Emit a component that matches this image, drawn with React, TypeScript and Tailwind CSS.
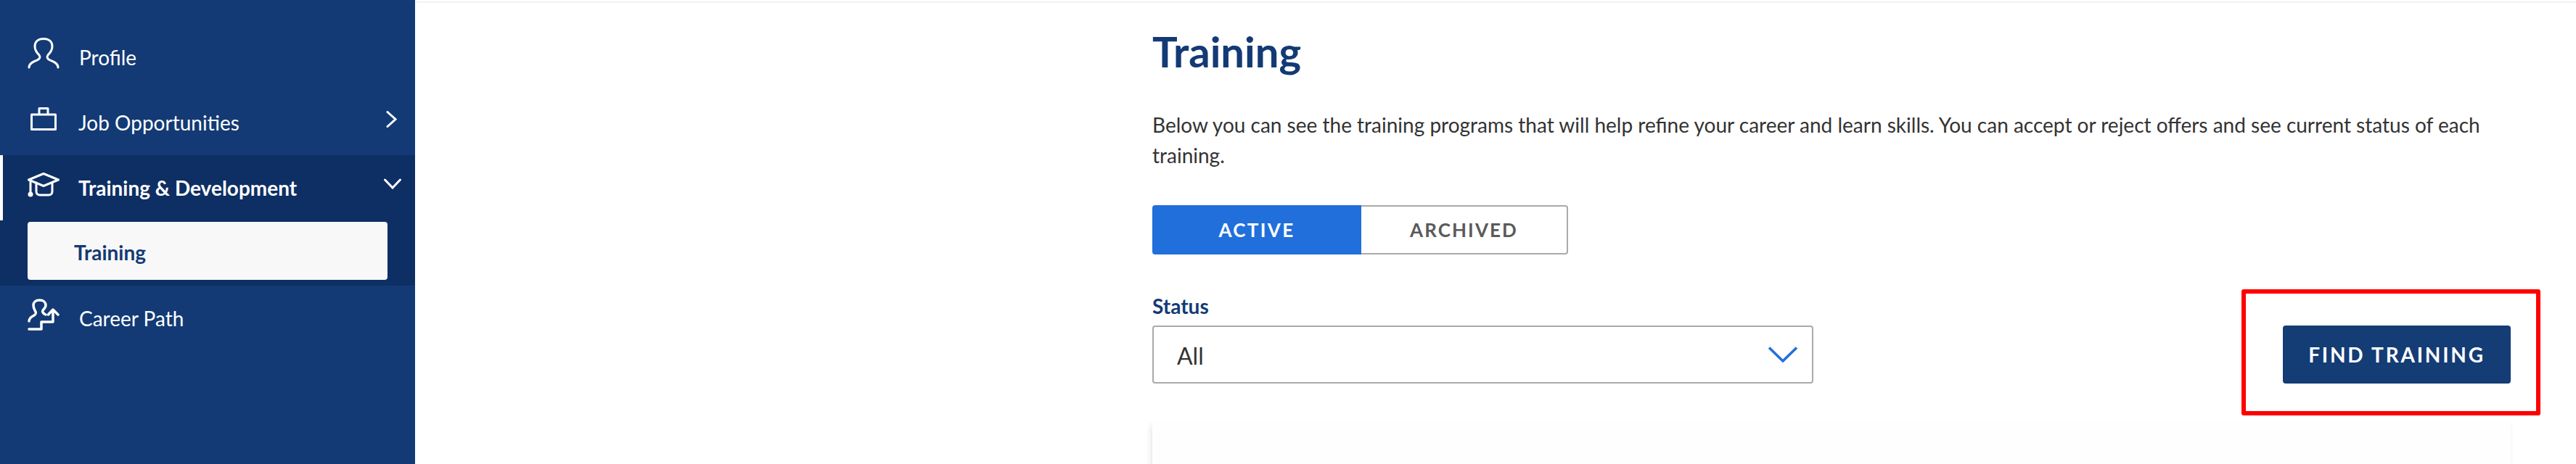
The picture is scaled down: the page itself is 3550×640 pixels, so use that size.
// ─── Sidebar icons ────────────────────────────────────────────────────────────

function ProfileIcon() {
  return (
    <svg width="44" height="44" viewBox="0 0 44 44" fill="none" stroke="white" strokeWidth="3" strokeLinecap="round">
      <path d="M2 41C2 35 9 33 13 31C17 29 18 27 16 24C12 20 10 16 10 12C10 5 15 1.5 22 1.5C29 1.5 34 5 34 12C34 16 32 20 28 24C26 27 27 29 31 31C35 33 42 35 42 41" />
    </svg>
  );
}

function BriefcaseIcon() {
  return (
    <svg width="36" height="32" viewBox="0 0 36 32" fill="none" stroke="white" strokeWidth="3" strokeLinejoin="round">
      <rect x="1.5" y="10" width="33" height="20.5" />
      <path d="M12 10V1.5H24V10" />
    </svg>
  );
}

function GradCapIcon() {
  return (
    <svg width="44" height="34" viewBox="0 0 44 34" fill="none" stroke="white" strokeWidth="3" strokeLinecap="round" strokeLinejoin="round">
      <path d="M22 1.5L42.5 10L22 18.5L1.5 10L22 1.5Z" />
      <path d="M12 14V26C12 29 14 31 17 31H29C32 31 34 29 34 26V14" />
      <path d="M4 11V27" />
      <circle cx="4" cy="30" r="3.5" fill="white" stroke="none" />
    </svg>
  );
}

function CareerIcon() {
  return (
    <svg width="44" height="44" viewBox="0 0 44 44" fill="none" stroke="white" strokeWidth="3.5" strokeLinecap="round" strokeLinejoin="round">
      <path d="M2 31C2 27 5 25 9 23C12 21 12 19 10 16C8.5 13 8 11 8 9C8 5 11 2 16.5 2C22 2 25 5 25 9C25 12 23 14 21 16C20 18 21 20 25 22" />
      <path d="M2 42H19V32H35V16" />
      <path d="M28.5 22L35 15L42 22" />
    </svg>
  );
}

// ─── Page ─────────────────────────────────────────────────────────────────────

export default function App() {
  return (
    <div className="relative flex h-[640px] w-[3550px] overflow-hidden bg-white font-[Lato,sans-serif]">
      <aside className="w-[572px] shrink-0 bg-[#133a75] pt-[34px] text-[28px] text-white">
        <div className="flex h-[90px] items-center pl-[38px]">
          <div className="-mt-[10px] flex w-[71px]">
            <ProfileIcon />
          </div>
          <span>Profile</span>
        </div>

        <div className="flex h-[90px] items-center pr-[25px] pl-[42px]">
          <div className="-mt-[10px] flex w-[66px]">
            <BriefcaseIcon />
          </div>
          <span className="flex-1">Job Opportunities</span>
          <svg width="15" height="23" viewBox="0 0 15 23" fill="none" stroke="white" strokeWidth="3" strokeLinecap="round" className="-mt-[9px]">
            <path d="M2 1.5L13 11.5L2 21.5" />
          </svg>
        </div>

        <div className="bg-[#0e2f64]">
          <div className="flex h-[90px] items-center border-l-4 border-white pr-[19px] pl-[34px]">
            <div className="-mt-[8px] flex w-[70px]">
              <GradCapIcon />
            </div>
            <span className="flex-1 font-bold">Training &amp; Development</span>
            <svg width="24" height="15" viewBox="0 0 24 15" fill="none" stroke="white" strokeWidth="3" strokeLinecap="round" className="-mt-[11px]">
              <path d="M1.5 2L12 13L22.5 2" />
            </svg>
          </div>
          <div className="px-[38px] pt-[2px] pb-[8px]">
            <div className="flex h-[80px] items-center rounded-[4px] bg-[#f8f8f8] pt-[3px] pl-[64px] font-bold text-[#133a75]">
              Training
            </div>
          </div>
        </div>

        <div className="flex h-[90px] items-center pl-[38px]">
          <div className="-mt-[10px] flex w-[71px]">
            <CareerIcon />
          </div>
          <span>Career Path</span>
        </div>
      </aside>

      <main className="mt-[2px] min-w-0 flex-1 border-t-2 border-[#f2f2f2] pr-[90px] pl-[1016px]">
        <h1 className="mt-[31px] text-[58px] leading-[72px] font-bold text-[#133a75]">Training</h1>

        <p className="mt-[44px] text-[28px] leading-[42px] text-[#333333]">
          Below you can see the training programs that will help refine your career and learn skills. You can accept or reject offers and see current status of each training.
        </p>

        <div className="mt-[48px] flex h-[68px] w-[573px] text-[26px] font-bold">
          <div className="flex w-[288px] items-center justify-center rounded-l-[4px] bg-[#216fdb] tracking-[0.09em] text-white">ACTIVE</div>
          <div className="flex flex-1 items-center justify-center rounded-r-[4px] border-2 border-l-0 border-[#aaaaaa] tracking-[0.08em] text-[#5a5a5a]">ARCHIVED</div>
        </div>

        <div className="mt-[50px] flex items-end justify-between">
          <div className="w-[911px]">
            <label className="block text-[28px] leading-[42px] font-bold text-[#133a75]">Status</label>
            <div className="mt-[6px] flex h-[80px] items-center justify-between rounded-[4px] border-2 border-[#aaaaaa] pr-[20px] pl-[32px] text-[32px] text-[#333333]">
              <span className="pt-[3px]">All</span>
              <svg width="40" height="22" viewBox="0 0 40 22" fill="none" stroke="#216fdb" strokeWidth="3.5">
                <path d="M1 1.5L20 20L39 1.5" />
              </svg>
            </div>
          </div>
          <button className="flex h-[80px] w-[314px] items-center justify-center rounded-[4px] bg-[#143c75] text-[28px] font-bold tracking-[0.1em] text-white">
            FIND TRAINING
          </button>
        </div>

        <div className="mt-[49px] h-[200px] bg-[#fefefe] shadow-[-2px_8px_8px_rgba(0,0,0,0.1)]" />
      </main>

      {/* annotation drawn over the screenshot */}
      <div className="pointer-events-none absolute top-[399px] left-[3089px] h-[174px] w-[412px] rounded-[3px] border-[6px] border-[#ff0000]" />
    </div>
  );
}
